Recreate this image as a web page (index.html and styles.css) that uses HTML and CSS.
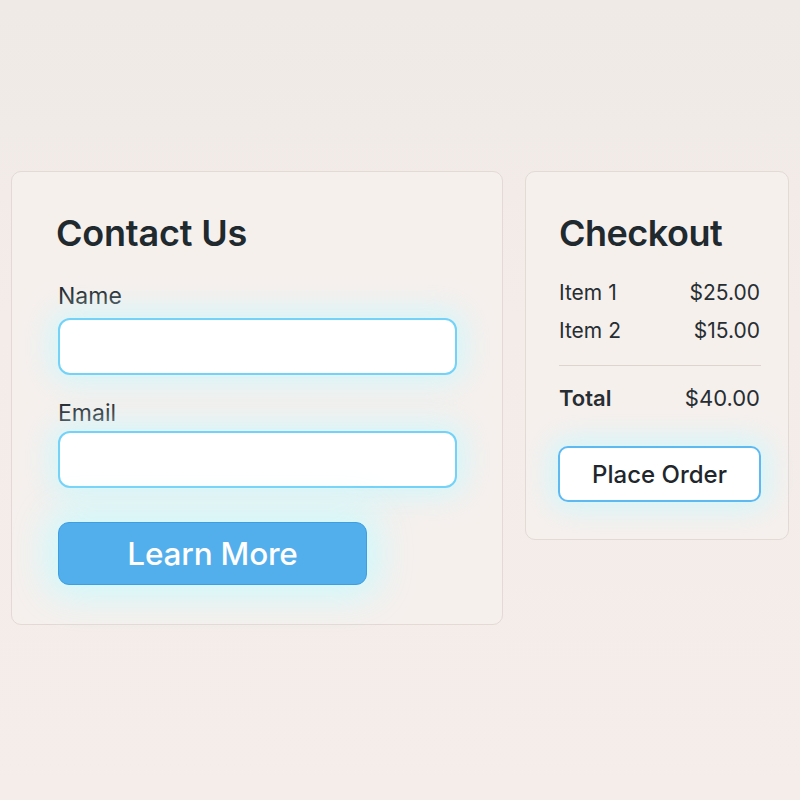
FILE: index.html
```html
<!DOCTYPE html>
<html>
<head>
<meta charset="utf-8">
<link rel="stylesheet" href="styles.css">
</head>
<body>
<main class="page">
  <section class="card contact">
    <h1 class="title">Contact Us</h1>
    <label class="label">Name</label>
    <div class="input"></div>
    <label class="label label-email">Email</label>
    <div class="input"></div>
    <button class="btn-primary">Learn More</button>
  </section>
  <section class="card checkout">
    <h1 class="title">Checkout</h1>
    <div class="row"><span>Item 1</span><span>$25.00</span></div>
    <div class="row"><span>Item 2</span><span>$15.00</span></div>
    <hr class="divider">
    <div class="row total"><span>Total</span><span class="amount">$40.00</span></div>
    <button class="btn-outline">Place Order</button>
  </section>
</main>
</body>
</html>
```

FILE: styles.css
```css
* { box-sizing: border-box; }
html, body { margin: 0; height: 100%; }
body {
  background: linear-gradient(180deg, #efeae6 0%, #f4ece8 40%, #f5ede9 100%);
  font-family: Inter, "Noto Sans", sans-serif;
  color: #1f272c;
}
.page {
  display: flex;
  align-items: flex-start;
  gap: 22px;
  padding: 171px 0 0 11px;
}
.card {
  background: #f6f0ed;
  border: 1.5px solid #e3d9d5;
  border-radius: 10px;
  display: flex;
  flex-direction: column;
}
.contact {
  width: 492px;
  height: 454px;
  padding: 38px 46px 0 45px;
}
.checkout {
  width: 264px;
  height: 369px;
  padding: 38px 28px 0 33px;
}
.title {
  margin: 0;
  font-size: 36px;
  font-weight: 600;
  line-height: 46px;
  letter-spacing: -0.5px;
  color: #20292e;
}
.contact .title { margin-left: -1px; letter-spacing: -0.2px; }
.label {
  font-size: 23px;
  line-height: 28px;
  margin: 26px 0 8px 1px;
  color: #1f272c;
}
.label-email { margin-top: 24px; margin-bottom: 4px; }
.input {
  margin-left: 1px;
  width: 399px;
  height: 57px;
  background: #ffffff;
  border: 2.5px solid #72d2f8;
  border-radius: 12px;
  box-shadow: 0 0 30px 8px rgba(200, 248, 255, 0.75);
}
.btn-primary {
  margin: 34px 0 0 1px;
  width: 309px;
  height: 63px;
  background: #53aeec;
  border: 1px solid #3d9fe3;
  border-radius: 11px;
  color: #ffffff;
  font-family: Inter, "Noto Sans", sans-serif;
  font-size: 31.5px;
  font-weight: 500;
  letter-spacing: -0.2px;
  box-shadow: 0 0 36px 12px rgba(200, 250, 255, 0.85);
}
.row {
  display: flex;
  justify-content: space-between;
  font-size: 21px;
  line-height: 26px;
  margin-top: 12px;
  color: #262e33;
}
.checkout .title + .row { margin-top: 24px; }
.divider {
  border: 0;
  border-top: 1.5px solid #ddd4d0;
  margin: 21px 0 0 0;
  width: 202px;
}
.total { margin-top: 19px; font-size: 22px; }
.total span:first-child { font-weight: 600; }
.btn-outline {
  margin: 35px 0 0 -1px;
  width: 203px;
  height: 56px;
  background: #ffffff;
  border: 2.5px solid #5db9f2;
  border-radius: 10px;
  color: #1f272c;
  font-family: Inter, "Noto Sans", sans-serif;
  font-size: 24px;
  font-weight: 500;
  box-shadow: 0 0 28px 8px rgba(200, 248, 255, 0.75);
}
```
